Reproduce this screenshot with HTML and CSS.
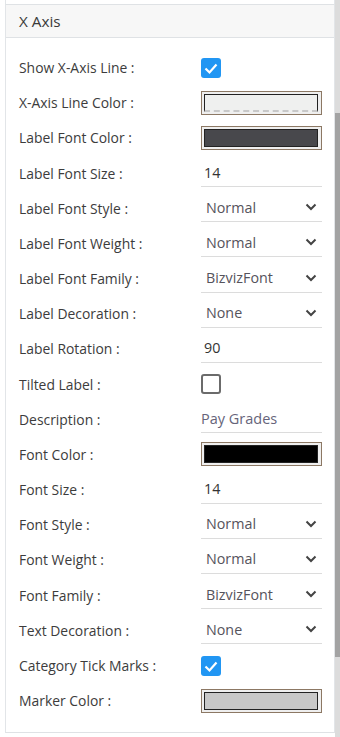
FILE: index.html
```html
<!DOCTYPE html>
<html lang="en">
<head>
    <meta charset="UTF-8">
    <meta name="viewport" content="width=device-width, initial-scale=1.0">
    <title>X Axis Properties</title>
    <link rel="stylesheet" href="styles.css">
</head>
<body>
    <div class="frame">
        <div class="panel">
            <div class="prev-card"></div>
            <div class="card">
                <div class="card-header">X Axis</div>
                <div class="card-body">
                    <div class="row">
                        <span class="label">Show X-Axis Line :</span>
                        <span class="check checked"><svg viewBox="0 0 20 20"><path d="M4.5 10.5 L8.5 14.5 L15.5 6.5"/></svg></span>
                    </div>
                    <div class="row">
                        <span class="label">X-Axis Line Color :</span>
                        <span class="color"><span class="swatch light"></span></span>
                    </div>
                    <div class="row">
                        <span class="label">Label Font Color :</span>
                        <span class="color"><span class="swatch" style="background:#48484c"></span></span>
                    </div>
                    <div class="row">
                        <span class="label">Label Font Size :</span>
                        <span class="field text">14</span>
                    </div>
                    <div class="row">
                        <span class="label">Label Font Style :</span>
                        <span class="field select">Normal<svg viewBox="0 0 12 8"><path d="M1.5 1.5 L6 6 L10.5 1.5"/></svg></span>
                    </div>
                    <div class="row">
                        <span class="label">Label Font Weight :</span>
                        <span class="field select">Normal<svg viewBox="0 0 12 8"><path d="M1.5 1.5 L6 6 L10.5 1.5"/></svg></span>
                    </div>
                    <div class="row">
                        <span class="label">Label Font Family :</span>
                        <span class="field select">BizvizFont<svg viewBox="0 0 12 8"><path d="M1.5 1.5 L6 6 L10.5 1.5"/></svg></span>
                    </div>
                    <div class="row">
                        <span class="label">Label Decoration :</span>
                        <span class="field select">None<svg viewBox="0 0 12 8"><path d="M1.5 1.5 L6 6 L10.5 1.5"/></svg></span>
                    </div>
                    <div class="row">
                        <span class="label">Label Rotation :</span>
                        <span class="field text">90</span>
                    </div>
                    <div class="row">
                        <span class="label">Tilted Label :</span>
                        <span class="check"></span>
                    </div>
                    <div class="row">
                        <span class="label">Description :</span>
                        <span class="field desc">Pay Grades</span>
                    </div>
                    <div class="row">
                        <span class="label">Font Color :</span>
                        <span class="color"><span class="swatch" style="background:#000000"></span></span>
                    </div>
                    <div class="row">
                        <span class="label">Font Size :</span>
                        <span class="field text">14</span>
                    </div>
                    <div class="row">
                        <span class="label">Font Style :</span>
                        <span class="field select">Normal<svg viewBox="0 0 12 8"><path d="M1.5 1.5 L6 6 L10.5 1.5"/></svg></span>
                    </div>
                    <div class="row">
                        <span class="label">Font Weight :</span>
                        <span class="field select">Normal<svg viewBox="0 0 12 8"><path d="M1.5 1.5 L6 6 L10.5 1.5"/></svg></span>
                    </div>
                    <div class="row">
                        <span class="label">Font Family :</span>
                        <span class="field select">BizvizFont<svg viewBox="0 0 12 8"><path d="M1.5 1.5 L6 6 L10.5 1.5"/></svg></span>
                    </div>
                    <div class="row">
                        <span class="label">Text Decoration :</span>
                        <span class="field select">None<svg viewBox="0 0 12 8"><path d="M1.5 1.5 L6 6 L10.5 1.5"/></svg></span>
                    </div>
                    <div class="row">
                        <span class="label">Category Tick Marks :</span>
                        <span class="check checked"><svg viewBox="0 0 20 20"><path d="M4.5 10.5 L8.5 14.5 L15.5 6.5"/></svg></span>
                    </div>
                    <div class="row">
                        <span class="label">Marker Color :</span>
                        <span class="color"><span class="swatch" style="background:#c8c8c8"></span></span>
                    </div>
                </div>
            </div>
        </div>
        <div class="scrollbar">
            <div class="thumb"></div>
        </div>
    </div>
</body>
</html>
```

FILE: styles.css
```css
body {
    margin: 0;
    padding: 0;
    background: #ffffff;
    font-family: 'Open Sans', 'Noto Sans', sans-serif;
    color: #3a3a3a;
    overflow: hidden;
}

.frame {
    display: flex;
    height: 737px;
}

.panel {
    flex: 1;
    padding-left: 5px;
    overflow: hidden;
}

.prev-card {
    height: 4px;
    border-left: 1px solid #e2e5e8;
    border-right: 1px solid #e2e5e8;
    border-bottom: 1px solid #dfe2e5;
}

.card {
    border-left: 1px solid #e2e5e8;
    border-right: 1px solid #e2e5e8;
    border-bottom: 1px solid #dfe2e5;
}

.card-header {
    height: 33px;
    box-sizing: border-box;
    background: #f7f7f7;
    border-bottom: 1px solid #dfe2e5;
    padding-left: 13px;
    display: flex;
    align-items: center;
    font-size: 15.3px;
    color: #3a3a3a;
}

.card-body {
    padding: 12px 12px 12px 13px;
    height: 694px;
    box-sizing: border-box;
}

.row {
    display: flex;
    align-items: center;
    height: 35.18px;
}

.label {
    width: 182px;
    font-size: 13.9px;
    color: #3c3c3c;
    white-space: nowrap;
}

.check {
    width: 20px;
    height: 20px;
    box-sizing: border-box;
    border: 2px solid #6b6b6b;
    border-radius: 3px;
    display: flex;
}

.check.checked {
    border: none;
    background: #2196f3;
}

.check svg {
    width: 20px;
    height: 20px;
    fill: none;
    stroke: #ffffff;
    stroke-width: 2.2;
}

.color {
    width: 121px;
    height: 24px;
    box-sizing: border-box;
    border: 1px solid #8c7864;
    background: #efefef;
    padding: 2px 3px 2px 2px;
    display: flex;
}

.swatch {
    flex: 1;
    border: 1.5px solid #222222;
}

.swatch.light {
    background: #eff0ef;
    border-bottom: 2px dashed #c8c8c8;
}

.field {
    width: 121px;
    height: 27px;
    box-sizing: border-box;
    border-bottom: 1px solid #dcdcdc;
    display: flex;
    align-items: center;
    padding-bottom: 2px;
    font-size: 14.3px;
    margin-top: 1px;
}

.field.text {
    padding-left: 3px;
    color: #333333;
}

.field.select {
    padding-left: 5px;
    padding-right: 5px;
    justify-content: space-between;
    color: #55535c;
}

.field.desc {
    color: #66647a;
    font-size: 14.5px;
}

.select svg {
    width: 12px;
    height: 8px;
    fill: none;
    stroke: #444444;
    stroke-width: 2;
}

.scrollbar {
    width: 5px;
    background: #dcdcdc;
}

.thumb {
    margin-top: 113px;
    height: 544px;
    background: #a3a3a3;
}
```
